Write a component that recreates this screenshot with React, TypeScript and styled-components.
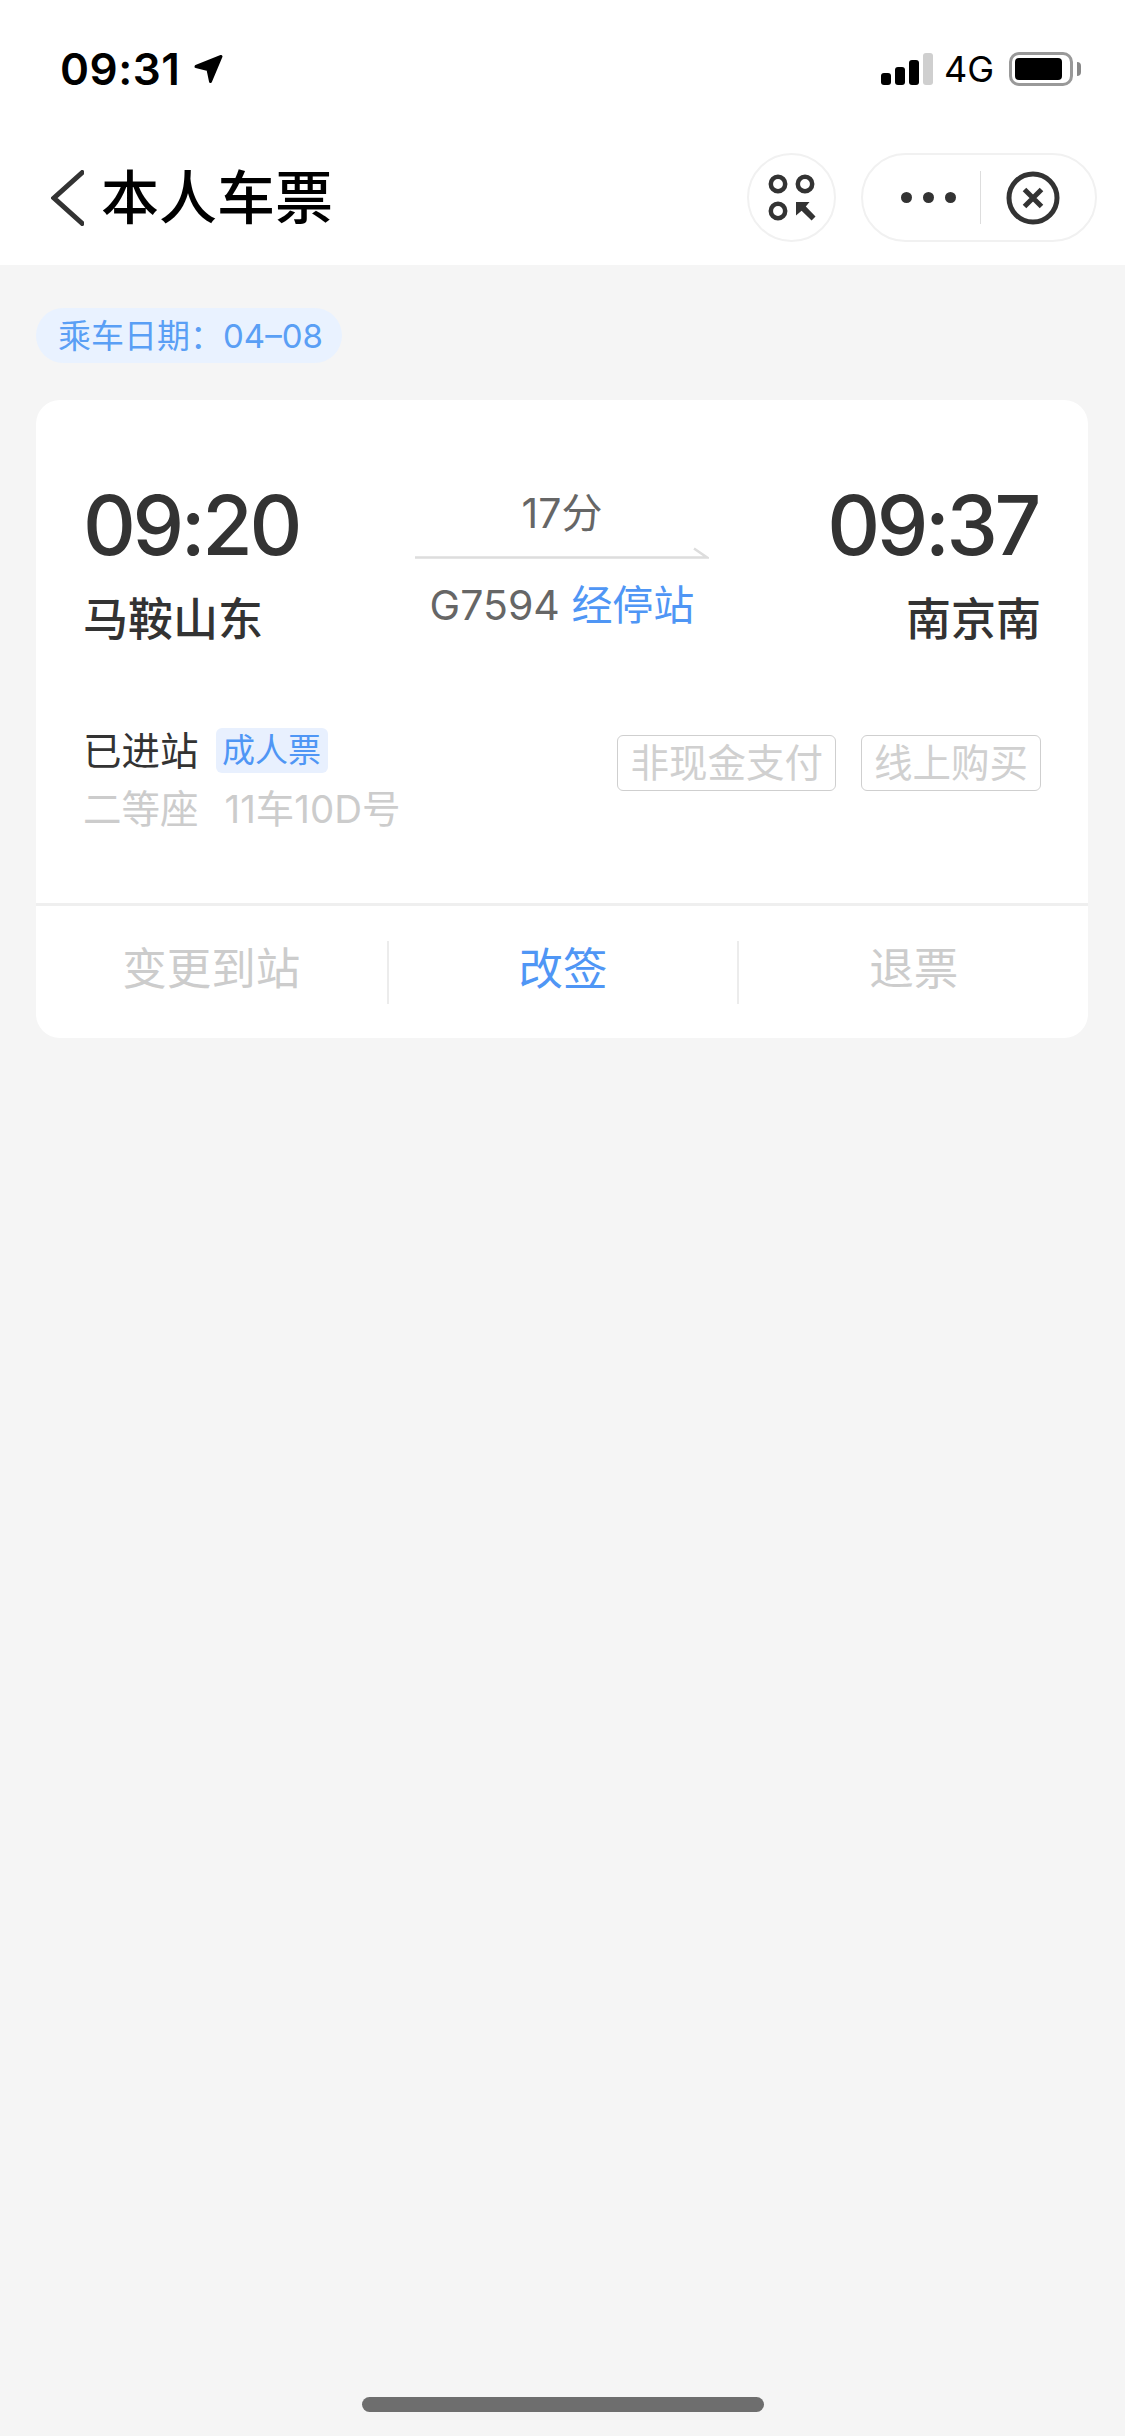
import React from 'react';
import styled, { createGlobalStyle } from 'styled-components';

const GlobalStyle = createGlobalStyle`
  html, body {
    margin: 0;
    padding: 0;
    background: #f5f5f5;
  }
  * {
    box-sizing: border-box;
  }
`;

const Page = styled.div`
  width: 1125px;
  height: 2436px;
  display: flex;
  flex-direction: column;
  overflow: hidden;
  background: #f5f5f5;
  font-family: Inter, "Noto Sans CJK SC", sans-serif;
  color: #333;
`;

const Header = styled.header`
  background: #fff;
`;

const StatusBar = styled.div`
  height: 138px;
  display: flex;
  align-items: center;
  justify-content: space-between;
  padding: 0 44px 0 60px;
  color: #000;
`;

const ClockGroup = styled.div`
  display: flex;
  align-items: center;
  gap: 14px;
`;

const Clock = styled.span`
  font-size: 44px;
  line-height: 48px;
  font-weight: 600;
  letter-spacing: 0.5px;
`;

const StatusGroup = styled.div`
  display: flex;
  align-items: center;
`;

const Signal = styled.div`
  display: flex;
  align-items: flex-end;
  gap: 4.5px;
  margin-right: 11px;
`;

const SignalBar = styled.i<{ $height: number; $off?: boolean }>`
  display: block;
  width: 9.5px;
  height: ${p => p.$height}px;
  border-radius: 3px;
  background: ${p => (p.$off ? '#cfcfcf' : '#000')};
`;

const Network = styled.span`
  font-size: 36px;
  line-height: 40px;
  margin-right: 15px;
`;

const Battery = styled.div`
  width: 64px;
  height: 34px;
  padding: 3px;
  border: 3px solid #999;
  border-radius: 10px;
  margin-right: 4px;
`;

const BatteryLevel = styled.div`
  width: 47px;
  height: 22px;
  border-radius: 4px;
  background: #000;
`;

const BatteryCap = styled.div`
  width: 4px;
  height: 14px;
  border-radius: 0 4px 4px 0;
  background: #888;
`;

const NavBar = styled.nav`
  height: 127px;
  display: flex;
  align-items: center;
  justify-content: space-between;
  padding: 0 28px 8px 51px;
`;

const NavLeft = styled.div`
  display: flex;
  align-items: center;
  gap: 17px;
`;

const Title = styled.h1`
  margin: 0;
  font-size: 58px;
  line-height: 64px;
  font-weight: 500;
  color: #000;
`;

const NavRight = styled.div`
  display: flex;
  align-items: center;
  gap: 25px;
`;

const RoundButton = styled.div`
  width: 89px;
  height: 89px;
  display: flex;
  align-items: center;
  justify-content: center;
  border: 2px solid #f1f1f1;
  border-radius: 50%;
`;

const Capsule = styled.div`
  width: 236px;
  height: 89px;
  display: flex;
  align-items: center;
  border: 2px solid #f1f1f1;
  border-radius: 45px;
`;

const CapsulePart = styled.div<{ $pad: string }>`
  flex: 1;
  display: flex;
  align-items: center;
  justify-content: center;
  padding: ${p => p.$pad};
`;

const Dots = styled.div`
  display: flex;
  gap: 11px;
`;

const Dot = styled.i`
  display: block;
  width: 11px;
  height: 11px;
  border-radius: 50%;
  background: #333;
`;

const CapsuleDivider = styled.div`
  width: 1px;
  height: 53px;
  background: #ddd;
`;

const Content = styled.main`
  flex: 1;
  padding: 43px 37px 0 36px;
`;

const DateChip = styled.div`
  width: 306px;
  height: 55px;
  display: flex;
  align-items: center;
  padding-left: 22px;
  border-radius: 28px;
  background: #e9f2ff;
  color: #5a9ff5;
  font-size: 33px;
  line-height: 40px;
  white-space: nowrap;
`;

const Card = styled.section`
  height: 638px;
  margin-top: 37px;
  border-radius: 24px;
  background: #fff;
  overflow: hidden;
`;

const CardBody = styled.div`
  height: 503px;
  padding: 86px 47px 0 47px;
`;

const Route = styled.div`
  display: grid;
  grid-template-columns: 1fr 294px 1fr;
`;

const Stop = styled.div<{ $end?: boolean }>`
  display: flex;
  flex-direction: column;
  align-items: ${p => (p.$end ? 'flex-end' : 'flex-start')};
`;

const StopTime = styled.div<{ $end?: boolean }>`
  margin-right: ${p => (p.$end ? '3px' : '0')};
  font-size: 82px;
  line-height: 80px;
  font-weight: 500;
  letter-spacing: -3.4px;
  color: #333;
`;

const StopName = styled.div`
  margin-top: 26px;
  font-size: 45px;
  line-height: 56px;
  font-weight: 500;
  color: #333;
`;

const Journey = styled.div`
  display: flex;
  flex-direction: column;
  align-items: center;
  padding-top: 7px;
  color: #666;
  font-size: 41px;
`;

const Duration = styled.div`
  line-height: 40px;
`;

const JourneyArrow = styled.svg`
  display: block;
  margin-top: 14px;
`;

const Train = styled.div`
  margin-top: 24px;
  line-height: 44px;
  white-space: nowrap;
`;

const Accent = styled.span`
  color: #4f96f5;
`;

const Info = styled.div`
  display: flex;
  justify-content: space-between;
  margin-top: 80px;
`;

const InfoLine = styled.div<{ $muted?: boolean; $gap: number }>`
  display: flex;
  align-items: center;
  gap: ${p => p.$gap}px;
  min-height: 45px;
  font-size: 38.5px;
  line-height: 44px;
  color: ${p => (p.$muted ? '#ccc' : '#333')};
  & + & {
    margin-top: 13px;
  }
`;

const TicketType = styled.span`
  height: 45px;
  padding: 0 6.5px;
  border-radius: 6px;
  background: #e8f0fe;
  color: #4f96f5;
  font-size: 33px;
  line-height: 45px;
`;

const Badges = styled.div`
  display: flex;
  align-items: flex-start;
  gap: 25px;
  padding-top: 7px;
`;

const Badge = styled.span`
  height: 56px;
  padding: 0 12px;
  border: 1px solid #cfcfcf;
  border-radius: 6px;
  color: #d0d0d0;
  font-size: 38.5px;
  line-height: 54px;
  white-space: nowrap;
`;

const Actions = styled.div`
  height: 135px;
  display: grid;
  grid-template-columns: repeat(3, 1fr);
  align-items: center;
  border-top: 3px solid #efefef;
`;

const Action = styled.div<{ $active?: boolean }>`
  height: 63px;
  display: flex;
  align-items: center;
  justify-content: center;
  padding-bottom: 14px;
  font-size: 44.5px;
  color: ${p => (p.$active ? '#4f96f5' : '#ccc')};
  & + & {
    border-left: 2px solid #ececec;
  }
`;

const HomeArea = styled.div`
  display: flex;
  justify-content: center;
  padding-bottom: 24px;
`;

const HomeBar = styled.div`
  width: 402px;
  height: 15px;
  border-radius: 8px;
  background: #6e6e6e;
`;

const LocationIcon = () => (
  <svg width="29" height="30" viewBox="0 0 29 30">
    <path d="M2 12.5 27 2.5 16.5 27.5 14 15.5Z" fill="#000" stroke="#000" strokeWidth="3" strokeLinejoin="round" />
  </svg>
);

const BackIcon = () => (
  <svg width="33" height="56" viewBox="0 0 33 56">
    <path d="M33 1 3 28 33 55" fill="none" stroke="#333" strokeWidth="5" />
  </svg>
);

const ScanIcon = () => (
  <svg width="52" height="52" viewBox="0 0 52 52">
    <g fill="none" stroke="#333" strokeWidth="4.5">
      <circle cx="12" cy="12" r="7.2" />
      <circle cx="39" cy="12" r="7.2" />
      <circle cx="12" cy="39" r="7.2" />
    </g>
    <path d="M30 30H43.5L39.8 34.6 49.5 44.6 45.6 48.5 35.6 38.8 30 43.5Z" fill="#333" />
  </svg>
);

const CloseIcon = () => (
  <svg width="54" height="54" viewBox="0 0 54 54">
    <circle cx="27" cy="27" r="24" fill="none" stroke="#333" strokeWidth="5" />
    <path d="M18.5 18.5 35.5 35.5M35.5 18.5 18.5 35.5" fill="none" stroke="#333" strokeWidth="5" />
  </svg>
);

export default function App() {
  return (
    <>
      <GlobalStyle />
      <Page>
        <Header>
          <StatusBar>
            <ClockGroup>
              <Clock>09:31</Clock>
              <LocationIcon />
            </ClockGroup>
            <StatusGroup>
              <Signal>
                <SignalBar $height={12} />
                <SignalBar $height={18} />
                <SignalBar $height={25} />
                <SignalBar $height={32} $off />
              </Signal>
              <Network>4G</Network>
              <Battery>
                <BatteryLevel />
              </Battery>
              <BatteryCap />
            </StatusGroup>
          </StatusBar>
          <NavBar>
            <NavLeft>
              <BackIcon />
              <Title>本人车票</Title>
            </NavLeft>
            <NavRight>
              <RoundButton>
                <ScanIcon />
              </RoundButton>
              <Capsule>
                <CapsulePart $pad="0 0 0 13px">
                  <Dots>
                    <Dot />
                    <Dot />
                    <Dot />
                  </Dots>
                </CapsulePart>
                <CapsuleDivider />
                <CapsulePart $pad="0 10px 0 0">
                  <CloseIcon />
                </CapsulePart>
              </Capsule>
            </NavRight>
          </NavBar>
        </Header>
        <Content>
          <DateChip>乘车日期：04–08</DateChip>
          <Card>
            <CardBody>
              <Route>
                <Stop>
                  <StopTime>09:20</StopTime>
                  <StopName>马鞍山东</StopName>
                </Stop>
                <Journey>
                  <Duration>17分</Duration>
                  <JourneyArrow width="294" height="12" viewBox="0 0 294 12">
                    <path d="M0 10.5H292L279 1.5" fill="none" stroke="#ddd" strokeWidth="2.5" />
                  </JourneyArrow>
                  <Train>
                    G7594 <Accent>经停站</Accent>
                  </Train>
                </Journey>
                <Stop $end>
                  <StopTime $end>09:37</StopTime>
                  <StopName>南京南</StopName>
                </Stop>
              </Route>
              <Info>
                <div>
                  <InfoLine $gap={17}>
                    已进站
                    <TicketType>成人票</TicketType>
                  </InfoLine>
                  <InfoLine $muted $gap={26}>
                    <span>二等座</span>
                    <span>11车10D号</span>
                  </InfoLine>
                </div>
                <Badges>
                  <Badge>非现金支付</Badge>
                  <Badge>线上购买</Badge>
                </Badges>
              </Info>
            </CardBody>
            <Actions>
              <Action>变更到站</Action>
              <Action $active>改签</Action>
              <Action>退票</Action>
            </Actions>
          </Card>
        </Content>
        <HomeArea>
          <HomeBar />
        </HomeArea>
      </Page>
    </>
  );
}
